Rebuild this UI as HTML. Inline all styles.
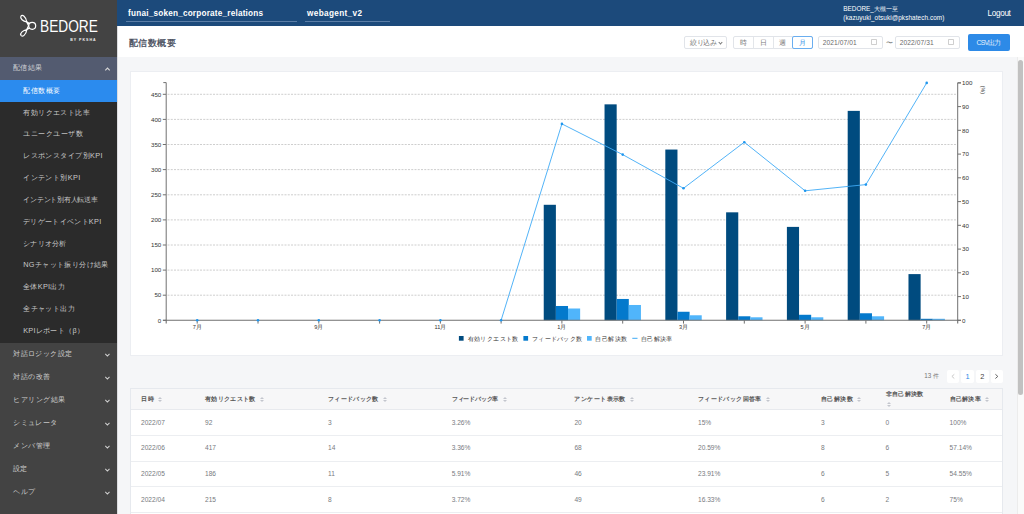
<!DOCTYPE html>
<html><head><meta charset="utf-8"><style>
*{margin:0;padding:0;box-sizing:border-box}
html,body{width:1024px;height:514px;overflow:hidden;background:#f5f6f8;font-family:"Liberation Sans",sans-serif}
.abs{position:absolute}
.t{position:absolute;white-space:nowrap}
.chev{position:absolute;width:3.4px;height:3.4px;border-right:1px solid #d0d0d0;border-bottom:1px solid #d0d0d0;transform:rotate(45deg)}
.chev.up{transform:rotate(225deg)}
.chev.sm{width:3px;height:3px;border-color:#777;border-width:0 0.9px 0.9px 0}
.box{position:absolute;border:1px solid #e1e4e9;border-radius:2px;background:#fff}
.cal{position:absolute;width:5.8px;height:5.6px;border:0.8px solid #cfcfcf;border-top-width:1.4px;border-radius:0.8px}
.srt{position:absolute;width:5px;height:6px}
.srt:before{content:"";position:absolute;left:0;top:0;border-left:2.3px solid transparent;border-right:2.3px solid transparent;border-bottom:2.3px solid #c3c6cd}
.srt:after{content:"";position:absolute;left:0;top:3.1px;border-left:2.3px solid transparent;border-right:2.3px solid transparent;border-top:2.3px solid #c3c6cd}
</style></head><body>
<div class="abs" style="left:0;top:0;width:117px;height:514px;background:#434343"></div>
<svg class="abs" style="left:15px;top:10px" width="30" height="30" viewBox="15 10 30 30">
<g fill="none" stroke="#fff" stroke-width="1.2" stroke-linejoin="round">
<circle cx="32.2" cy="25.8" r="3.5"/>
<path d="M26.8,22 C23,21.2 19.8,18.6 20.9,16.3 C22.2,14 26,16.5 26.8,22 Z"/>
<path d="M26.8,29.6 C23,30.4 19.8,33 20.9,35.3 C22.2,37.6 26,35.1 26.8,29.6 Z"/>
<path d="M26.6,21.8 L29.6,23.6 M26.6,29.8 L29.6,28 M26.6,21.8 L28.6,25.8 L26.6,29.8"/>
</g></svg>
<div class="abs" style="left:39.6px;top:18.2px;font-size:16.5px;line-height:17px;color:#fff;transform:scaleX(0.83);transform-origin:0 0">BEDORE</div>
<div class="abs" style="left:70.2px;top:37.8px;font-size:3.6px;color:#eee;letter-spacing:1px;font-weight:bold;line-height:5px">BY PKSHA</div>
<div class="abs" style="left:0;top:57px;width:117px;height:23px;background:#535b70"></div>
<div class="t" style="left:13.00px;top:63.24px;font-size:7.3px;line-height:10.22px;color:#d2d4d8;letter-spacing:0.400px">配信結果</div>
<svg class="abs" style="left:100px;top:60px" width="16" height="16" viewBox="100 60 16 16"><polyline points="105.3,70.3 107.5,68.1 109.7,70.3" fill="none" stroke="#d8d8d8" stroke-width="1.05"/></svg>
<div class="abs" style="left:0;top:80px;width:117px;height:262.5px;background:#2b2b2b"></div>
<div class="abs" style="left:0;top:80px;width:117px;height:22px;background:#2b8bee"></div>
<div class="t" style="left:23.20px;top:85.74px;font-size:7.3px;line-height:10.22px;color:#ffffff;letter-spacing:0.500px">配信数概要</div>
<div class="t" style="left:23.20px;top:107.57px;font-size:7.3px;line-height:10.22px;color:#c9c9c9;letter-spacing:0.450px">有効リクエスト比率</div>
<div class="t" style="left:23.20px;top:129.40px;font-size:7.3px;line-height:10.22px;color:#c9c9c9;letter-spacing:0.514px">ユニークユーザ数</div>
<div class="t" style="left:23.20px;top:151.23px;font-size:7.3px;line-height:10.22px;color:#c9c9c9;letter-spacing:0.421px">レスポンスタイプ別KPI</div>
<div class="t" style="left:23.20px;top:173.06px;font-size:7.3px;line-height:10.22px;color:#c9c9c9;letter-spacing:0.429px">インテント別KPI</div>
<div class="t" style="left:23.20px;top:194.89px;font-size:7.3px;line-height:10.22px;color:#c9c9c9;letter-spacing:-0.220px">インテント別有人転送率</div>
<div class="t" style="left:23.20px;top:216.72px;font-size:7.3px;line-height:10.22px;color:#c9c9c9;letter-spacing:0.294px">デリゲートイベントKPI</div>
<div class="t" style="left:23.20px;top:238.55px;font-size:7.3px;line-height:10.22px;color:#c9c9c9;letter-spacing:0.250px">シナリオ分析</div>
<div class="t" style="left:23.20px;top:260.38px;font-size:7.3px;line-height:10.22px;color:#c9c9c9;letter-spacing:0.391px">NGチャット振り分け結果</div>
<div class="t" style="left:23.20px;top:282.21px;font-size:7.3px;line-height:10.22px;color:#c9c9c9;letter-spacing:0.289px">全体KPI出力</div>
<div class="t" style="left:23.20px;top:304.04px;font-size:7.3px;line-height:10.22px;color:#c9c9c9;letter-spacing:0.417px">全チャット出力</div>
<div class="t" style="left:23.20px;top:325.87px;font-size:7.3px;line-height:10.22px;color:#c9c9c9;letter-spacing:0.309px">KPIレポート（β）</div>
<div class="t" style="left:13.20px;top:348.84px;font-size:7.3px;line-height:10.22px;color:#d0d0d0;letter-spacing:0.429px">対話ロジック設定</div>
<svg class="abs" style="left:100px;top:351.5px" width="16" height="8" viewBox="100 351.5 16 8"><polyline points="105.3,353.40 107.4,355.60 109.5,353.40" fill="none" stroke="#d0d0d0" stroke-width="1.05"/></svg>
<div class="t" style="left:13.20px;top:371.84px;font-size:7.3px;line-height:10.22px;color:#d0d0d0;letter-spacing:0.500px">対話の改善</div>
<svg class="abs" style="left:100px;top:374.5px" width="16" height="8" viewBox="100 374.5 16 8"><polyline points="105.3,376.40 107.4,378.60 109.5,376.40" fill="none" stroke="#d0d0d0" stroke-width="1.05"/></svg>
<div class="t" style="left:13.20px;top:394.84px;font-size:7.3px;line-height:10.22px;color:#d0d0d0;letter-spacing:0.517px">ヒアリング結果</div>
<svg class="abs" style="left:100px;top:397.5px" width="16" height="8" viewBox="100 397.5 16 8"><polyline points="105.3,399.40 107.4,401.60 109.5,399.40" fill="none" stroke="#d0d0d0" stroke-width="1.05"/></svg>
<div class="t" style="left:13.20px;top:417.84px;font-size:7.3px;line-height:10.22px;color:#d0d0d0;letter-spacing:0.360px">シミュレータ</div>
<svg class="abs" style="left:100px;top:420.5px" width="16" height="8" viewBox="100 420.5 16 8"><polyline points="105.3,422.40 107.4,424.60 109.5,422.40" fill="none" stroke="#d0d0d0" stroke-width="1.05"/></svg>
<div class="t" style="left:13.20px;top:440.84px;font-size:7.3px;line-height:10.22px;color:#d0d0d0;letter-spacing:0.475px">メンバ管理</div>
<svg class="abs" style="left:100px;top:443.5px" width="16" height="8" viewBox="100 443.5 16 8"><polyline points="105.3,445.40 107.4,447.60 109.5,445.40" fill="none" stroke="#d0d0d0" stroke-width="1.05"/></svg>
<div class="t" style="left:13.20px;top:463.84px;font-size:7.3px;line-height:10.22px;color:#d0d0d0;letter-spacing:0.200px">設定</div>
<svg class="abs" style="left:100px;top:466.5px" width="16" height="8" viewBox="100 466.5 16 8"><polyline points="105.3,468.40 107.4,470.60 109.5,468.40" fill="none" stroke="#d0d0d0" stroke-width="1.05"/></svg>
<div class="t" style="left:13.20px;top:486.84px;font-size:7.3px;line-height:10.22px;color:#d0d0d0;letter-spacing:0.400px">ヘルプ</div>
<svg class="abs" style="left:100px;top:489.5px" width="16" height="8" viewBox="100 489.5 16 8"><polyline points="105.3,491.40 107.4,493.60 109.5,491.40" fill="none" stroke="#d0d0d0" stroke-width="1.05"/></svg>
<div class="abs" style="left:117px;top:0;width:907px;height:26px;background:#1c4a7b"></div>
<div class="t" style="left:128.10px;top:8.36px;font-size:8.2px;line-height:11.48px;color:#ffffff;font-weight:bold;letter-spacing:0.207px">funai_soken_corporate_relations</div>
<div class="abs" style="left:126px;top:21px;width:171px;height:1px;background:#5a7da6"></div>
<div class="t" style="left:307.00px;top:8.36px;font-size:8.2px;line-height:11.48px;color:#ffffff;font-weight:bold;letter-spacing:0.358px">webagent_v2</div>
<div class="abs" style="left:305px;top:21px;width:85px;height:1px;background:#5a7da6"></div>
<div class="t" style="left:843.30px;top:4.89px;font-size:6.4px;line-height:8.96px;color:#ffffff">BEDORE_大槻一至</div>
<div class="t" style="left:843.30px;top:14.22px;font-size:6.4px;line-height:8.96px;color:#ffffff;letter-spacing:0.072px">(kazuyuki_otsuki@pkshatech.com)</div>
<div class="t" style="left:987.60px;top:8.06px;font-size:8.2px;line-height:11.48px;color:#ffffff;letter-spacing:-0.349px">Logout</div>
<div class="abs" style="left:117px;top:26px;width:907px;height:31px;background:#fff"></div>
<div class="t" style="left:128.50px;top:35.83px;font-size:9.4px;line-height:13.16px;color:#444a5a;letter-spacing:0.500px;-webkit-text-stroke:0.3px #444a5a">配信数概要</div>
<div class="box" style="left:684px;top:36px;width:43px;height:13px"></div>
<div class="t" style="left:690.00px;top:37.75px;font-size:6.6px;line-height:9.24px;color:#777;letter-spacing:-0.333px">絞り込み</div>
<span class="chev sm" style="left:719px;top:40.5px"></span>
<div class="box" style="left:733px;top:36px;width:80px;height:13px"></div>
<div class="abs" style="left:753px;top:36.5px;width:1px;height:12px;background:#e3e6ea"></div>
<div class="abs" style="left:773px;top:36.5px;width:1px;height:12px;background:#e3e6ea"></div>
<div class="t" style="left:739.50px;top:37.75px;font-size:6.6px;line-height:9.24px;color:#777">時</div>
<div class="t" style="left:759.50px;top:37.75px;font-size:6.6px;line-height:9.24px;color:#777">日</div>
<div class="t" style="left:779.00px;top:37.75px;font-size:6.6px;line-height:9.24px;color:#777">週</div>
<div class="abs" style="left:792px;top:35.5px;width:21px;height:13.5px;border:1px solid #6aaef0;border-radius:2px"></div>
<div class="t" style="left:798.80px;top:37.75px;font-size:6.6px;line-height:9.24px;color:#3d93e8">月</div>
<div class="box" style="left:818px;top:36px;width:65px;height:13px"></div>
<div class="t" style="left:822.70px;top:37.88px;font-size:6.6px;line-height:9.24px;color:#6a6a6a;letter-spacing:0.109px">2021/07/01</div>
<span class="cal" style="left:870.8px;top:39px"></span>
<div class="box" style="left:895px;top:36px;width:65px;height:13px"></div>
<div class="t" style="left:899.70px;top:37.88px;font-size:6.6px;line-height:9.24px;color:#6a6a6a;letter-spacing:0.109px">2022/07/31</div>
<span class="cal" style="left:947.8px;top:39px"></span>
<div class="t" style="left:886.40px;top:37.96px;font-size:7px;line-height:9.8px;color:#777">〜</div>
<div class="abs" style="left:968px;top:34px;width:42px;height:17px;background:#2d8ae7;border-radius:2px"></div>
<div class="t" style="left:976.50px;top:37.70px;font-size:6.8px;line-height:9.52px;color:#e8f2fc;letter-spacing:-0.746px">CSV出力</div>
<div class="abs" style="left:117px;top:26px;width:1px;height:488px;background:#dcdde0"></div>
<div class="abs" style="left:130px;top:71px;width:873px;height:284.5px;background:#fff;border:1px solid #eceef2"></div>
<svg class="abs" style="left:0;top:0" width="1024" height="514" viewBox="0 0 1024 514">
<line x1="167.5" y1="295.2" x2="957" y2="295.2" stroke="#bdbdbd" stroke-width="0.75" stroke-dasharray="2 1.25"/>
<line x1="167.5" y1="270.1" x2="957" y2="270.1" stroke="#bdbdbd" stroke-width="0.75" stroke-dasharray="2 1.25"/>
<line x1="167.5" y1="245.0" x2="957" y2="245.0" stroke="#bdbdbd" stroke-width="0.75" stroke-dasharray="2 1.25"/>
<line x1="167.5" y1="219.9" x2="957" y2="219.9" stroke="#bdbdbd" stroke-width="0.75" stroke-dasharray="2 1.25"/>
<line x1="167.5" y1="194.8" x2="957" y2="194.8" stroke="#bdbdbd" stroke-width="0.75" stroke-dasharray="2 1.25"/>
<line x1="167.5" y1="169.6" x2="957" y2="169.6" stroke="#bdbdbd" stroke-width="0.75" stroke-dasharray="2 1.25"/>
<line x1="167.5" y1="144.5" x2="957" y2="144.5" stroke="#bdbdbd" stroke-width="0.75" stroke-dasharray="2 1.25"/>
<line x1="167.5" y1="119.4" x2="957" y2="119.4" stroke="#bdbdbd" stroke-width="0.75" stroke-dasharray="2 1.25"/>
<line x1="167.5" y1="94.3" x2="957" y2="94.3" stroke="#bdbdbd" stroke-width="0.75" stroke-dasharray="2 1.25"/>
<rect x="543.74" y="204.79" width="12.15" height="115.51" fill="#004b7f"/>
<rect x="555.87" y="305.99" width="12.15" height="14.31" fill="#0479cc"/>
<rect x="568.00" y="308.50" width="12.15" height="11.80" fill="#50b5fb"/>
<rect x="604.53" y="104.35" width="12.15" height="215.95" fill="#004b7f"/>
<rect x="616.66" y="298.96" width="12.15" height="21.34" fill="#0479cc"/>
<rect x="628.79" y="304.98" width="12.15" height="15.32" fill="#50b5fb"/>
<rect x="665.32" y="149.55" width="12.15" height="170.75" fill="#004b7f"/>
<rect x="677.45" y="311.76" width="12.15" height="8.54" fill="#0479cc"/>
<rect x="689.58" y="315.28" width="12.15" height="5.02" fill="#50b5fb"/>
<rect x="726.11" y="212.33" width="12.15" height="107.97" fill="#004b7f"/>
<rect x="738.24" y="316.28" width="12.15" height="4.02" fill="#0479cc"/>
<rect x="750.37" y="317.29" width="12.15" height="3.01" fill="#50b5fb"/>
<rect x="786.90" y="226.89" width="12.15" height="93.41" fill="#004b7f"/>
<rect x="799.03" y="314.78" width="12.15" height="5.52" fill="#0479cc"/>
<rect x="811.16" y="317.29" width="12.15" height="3.01" fill="#50b5fb"/>
<rect x="847.69" y="110.88" width="12.15" height="209.42" fill="#004b7f"/>
<rect x="859.82" y="313.27" width="12.15" height="7.03" fill="#0479cc"/>
<rect x="871.95" y="316.28" width="12.15" height="4.02" fill="#50b5fb"/>
<rect x="908.48" y="274.10" width="12.15" height="46.20" fill="#004b7f"/>
<rect x="920.61" y="318.79" width="12.15" height="1.51" fill="#0479cc"/>
<rect x="932.74" y="318.79" width="12.15" height="1.51" fill="#50b5fb"/>
<polyline points="501.1,320.3 561.9,123.9 622.7,154.6 683.5,188.3 744.3,142.2 805.1,190.8 865.9,184.6 926.7,82.9" fill="none" stroke="#3eaaf6" stroke-width="0.9"/>
<path d="M163.3,82.6H166.2V320.3H163" fill="none" stroke="#707070" stroke-width="1"/>
<line x1="162.8" y1="320.3" x2="166" y2="320.3" stroke="#707070" stroke-width="1"/>
<text x="161.3" y="322.5" text-anchor="end" font-size="6.2" fill="#333">0</text>
<line x1="162.8" y1="295.2" x2="166" y2="295.2" stroke="#707070" stroke-width="1"/>
<text x="161.3" y="297.4" text-anchor="end" font-size="6.2" fill="#333">50</text>
<line x1="162.8" y1="270.1" x2="166" y2="270.1" stroke="#707070" stroke-width="1"/>
<text x="161.3" y="272.3" text-anchor="end" font-size="6.2" fill="#333">100</text>
<line x1="162.8" y1="245.0" x2="166" y2="245.0" stroke="#707070" stroke-width="1"/>
<text x="161.3" y="247.2" text-anchor="end" font-size="6.2" fill="#333">150</text>
<line x1="162.8" y1="219.9" x2="166" y2="219.9" stroke="#707070" stroke-width="1"/>
<text x="161.3" y="222.1" text-anchor="end" font-size="6.2" fill="#333">200</text>
<line x1="162.8" y1="194.8" x2="166" y2="194.8" stroke="#707070" stroke-width="1"/>
<text x="161.3" y="196.9" text-anchor="end" font-size="6.2" fill="#333">250</text>
<line x1="162.8" y1="169.6" x2="166" y2="169.6" stroke="#707070" stroke-width="1"/>
<text x="161.3" y="171.8" text-anchor="end" font-size="6.2" fill="#333">300</text>
<line x1="162.8" y1="144.5" x2="166" y2="144.5" stroke="#707070" stroke-width="1"/>
<text x="161.3" y="146.7" text-anchor="end" font-size="6.2" fill="#333">350</text>
<line x1="162.8" y1="119.4" x2="166" y2="119.4" stroke="#707070" stroke-width="1"/>
<text x="161.3" y="121.6" text-anchor="end" font-size="6.2" fill="#333">400</text>
<line x1="162.8" y1="94.3" x2="166" y2="94.3" stroke="#707070" stroke-width="1"/>
<text x="161.3" y="96.5" text-anchor="end" font-size="6.2" fill="#333">450</text>
<path d="M961,82.85H957.7V320.3H961" fill="none" stroke="#707070" stroke-width="1"/>
<line x1="957.7" y1="320.3" x2="961" y2="320.3" stroke="#707070" stroke-width="1"/>
<text x="962" y="322.5" font-size="6.2" fill="#333">0</text>
<line x1="957.7" y1="296.6" x2="961" y2="296.6" stroke="#707070" stroke-width="1"/>
<text x="962" y="298.8" font-size="6.2" fill="#333">10</text>
<line x1="957.7" y1="272.8" x2="961" y2="272.8" stroke="#707070" stroke-width="1"/>
<text x="962" y="275.0" font-size="6.2" fill="#333">20</text>
<line x1="957.7" y1="249.1" x2="961" y2="249.1" stroke="#707070" stroke-width="1"/>
<text x="962" y="251.3" font-size="6.2" fill="#333">30</text>
<line x1="957.7" y1="225.3" x2="961" y2="225.3" stroke="#707070" stroke-width="1"/>
<text x="962" y="227.5" font-size="6.2" fill="#333">40</text>
<line x1="957.7" y1="201.6" x2="961" y2="201.6" stroke="#707070" stroke-width="1"/>
<text x="962" y="203.8" font-size="6.2" fill="#333">50</text>
<line x1="957.7" y1="177.8" x2="961" y2="177.8" stroke="#707070" stroke-width="1"/>
<text x="962" y="180.0" font-size="6.2" fill="#333">60</text>
<line x1="957.7" y1="154.1" x2="961" y2="154.1" stroke="#707070" stroke-width="1"/>
<text x="962" y="156.3" font-size="6.2" fill="#333">70</text>
<line x1="957.7" y1="130.3" x2="961" y2="130.3" stroke="#707070" stroke-width="1"/>
<text x="962" y="132.5" font-size="6.2" fill="#333">80</text>
<line x1="957.7" y1="106.6" x2="961" y2="106.6" stroke="#707070" stroke-width="1"/>
<text x="962" y="108.8" font-size="6.2" fill="#333">90</text>
<line x1="957.7" y1="82.9" x2="961" y2="82.9" stroke="#707070" stroke-width="1"/>
<text x="962" y="85.1" font-size="6.2" fill="#333">100</text>
<text transform="translate(980.6,85.8) rotate(90)" font-size="5.2" fill="#333">(%)</text>
<path d="M166.2,323.6V320.3H957.7V323.6" fill="none" stroke="#707070" stroke-width="1.1"/>
<line x1="197.2" y1="320.3" x2="197.2" y2="323.6" stroke="#707070" stroke-width="1"/>
<text x="197.2" y="329.1" text-anchor="middle" font-size="5.6" fill="#333">7月</text>
<line x1="258.0" y1="320.3" x2="258.0" y2="323.6" stroke="#707070" stroke-width="1"/>
<line x1="318.8" y1="320.3" x2="318.8" y2="323.6" stroke="#707070" stroke-width="1"/>
<text x="318.8" y="329.1" text-anchor="middle" font-size="5.6" fill="#333">9月</text>
<line x1="379.6" y1="320.3" x2="379.6" y2="323.6" stroke="#707070" stroke-width="1"/>
<line x1="440.4" y1="320.3" x2="440.4" y2="323.6" stroke="#707070" stroke-width="1"/>
<text x="440.4" y="329.1" text-anchor="middle" font-size="5.6" fill="#333">11月</text>
<line x1="501.1" y1="320.3" x2="501.1" y2="323.6" stroke="#707070" stroke-width="1"/>
<line x1="561.9" y1="320.3" x2="561.9" y2="323.6" stroke="#707070" stroke-width="1"/>
<text x="561.9" y="329.1" text-anchor="middle" font-size="5.6" fill="#333">1月</text>
<line x1="622.7" y1="320.3" x2="622.7" y2="323.6" stroke="#707070" stroke-width="1"/>
<line x1="683.5" y1="320.3" x2="683.5" y2="323.6" stroke="#707070" stroke-width="1"/>
<text x="683.5" y="329.1" text-anchor="middle" font-size="5.6" fill="#333">3月</text>
<line x1="744.3" y1="320.3" x2="744.3" y2="323.6" stroke="#707070" stroke-width="1"/>
<line x1="805.1" y1="320.3" x2="805.1" y2="323.6" stroke="#707070" stroke-width="1"/>
<text x="805.1" y="329.1" text-anchor="middle" font-size="5.6" fill="#333">5月</text>
<line x1="865.9" y1="320.3" x2="865.9" y2="323.6" stroke="#707070" stroke-width="1"/>
<line x1="926.7" y1="320.3" x2="926.7" y2="323.6" stroke="#707070" stroke-width="1"/>
<text x="926.7" y="329.1" text-anchor="middle" font-size="5.6" fill="#333">7月</text>
<circle cx="197.2" cy="320.3" r="1.3" fill="#1f96ee"/>
<circle cx="258.0" cy="320.3" r="1.3" fill="#1f96ee"/>
<circle cx="318.8" cy="320.3" r="1.3" fill="#1f96ee"/>
<circle cx="379.6" cy="320.3" r="1.3" fill="#1f96ee"/>
<circle cx="440.4" cy="320.3" r="1.3" fill="#1f96ee"/>
<circle cx="501.1" cy="320.3" r="1.3" fill="#1f96ee"/>
<circle cx="561.9" cy="123.9" r="1.3" fill="#1f96ee"/>
<circle cx="622.7" cy="154.6" r="1.3" fill="#1f96ee"/>
<circle cx="683.5" cy="188.3" r="1.3" fill="#1f96ee"/>
<circle cx="744.3" cy="142.2" r="1.3" fill="#1f96ee"/>
<circle cx="805.1" cy="190.8" r="1.3" fill="#1f96ee"/>
<circle cx="865.9" cy="184.6" r="1.3" fill="#1f96ee"/>
<circle cx="926.7" cy="82.9" r="1.3" fill="#1f96ee"/>
<rect x="458.9" y="336" width="4.7" height="4.7" fill="#004b7f"/>
<text x="467.6" y="340.8" font-size="6.35" fill="#333" textLength="50.8" lengthAdjust="spacing">有効リクエスト数</text>
<rect x="523.4" y="336" width="4.7" height="4.7" fill="#0479cc"/>
<text x="532" y="340.8" font-size="6.35" fill="#333" textLength="50" lengthAdjust="spacing">フィードバック数</text>
<rect x="587" y="336" width="4.7" height="4.7" fill="#50b5fb"/>
<text x="595.3" y="340.8" font-size="6.35" fill="#333" textLength="32.1" lengthAdjust="spacing">自己解決数</text>
<line x1="632.3" y1="338.3" x2="637.5" y2="338.3" stroke="#3eaaf6" stroke-width="1"/>
<text x="641" y="340.8" font-size="6.35" fill="#333" textLength="31.2" lengthAdjust="spacing">自己解決率</text>
</svg>
<div class="t" style="left:924.30px;top:371.76px;font-size:6.3px;line-height:8.82px;color:#777;letter-spacing:-0.055px">13 件</div>
<div class="abs" style="left:946.7px;top:370px;width:12.5px;height:12.5px;background:#fff;border-radius:2px"></div>
<div class="abs" style="left:961.2px;top:370px;width:12.5px;height:12.5px;background:#fff;border-radius:2px"></div>
<div class="t" style="left:965.39px;top:372.02px;font-size:7.4px;line-height:10.36px;color:#2d8ae7">1</div>
<div class="abs" style="left:976.0px;top:370px;width:12.5px;height:12.5px;background:#fff;border-radius:2px"></div>
<div class="t" style="left:980.19px;top:372.02px;font-size:7.4px;line-height:10.36px;color:#444">2</div>
<div class="abs" style="left:990.5px;top:370px;width:12.5px;height:12.5px;background:#fff;border-radius:2px"></div>
<svg class="abs" style="left:0;top:0" width="1024" height="514"><polyline points="954.3,374.3 951.9,376.4 954.3,378.5" fill="none" stroke="#c4c4c4" stroke-width="0.9"/><polyline points="995.4,374.3 997.8,376.4 995.4,378.5" fill="none" stroke="#555" stroke-width="0.9"/></svg>
<div class="abs" style="left:130px;top:388px;width:873px;height:130px;background:#fff;border:1px solid #e6e9ee"></div>
<div class="abs" style="left:131px;top:389px;width:871px;height:20.5px;background:#f7f7f8;border-bottom:1px solid #e8eaee"></div>
<div class="abs" style="left:131px;top:435.2px;width:871px;height:1px;background:#eceef1"></div>
<div class="abs" style="left:131px;top:460.8px;width:871px;height:1px;background:#eceef1"></div>
<div class="abs" style="left:131px;top:486.4px;width:871px;height:1px;background:#eceef1"></div>
<div class="abs" style="left:131px;top:512.0px;width:871px;height:1px;background:#eceef1"></div>
<div class="t" style="left:141.00px;top:394.76px;font-size:6.3px;line-height:8.82px;color:#555;font-weight:bold;letter-spacing:0.600px">日時</div>
<span class="srt" style="left:158.1px;top:397px"></span>
<div class="t" style="left:205.00px;top:394.76px;font-size:6.3px;line-height:8.82px;color:#555;font-weight:bold;letter-spacing:0.357px">有効リクエスト数</div>
<span class="srt" style="left:260.0px;top:397px"></span>
<div class="t" style="left:328.00px;top:394.76px;font-size:6.3px;line-height:8.82px;color:#555;font-weight:bold;letter-spacing:0.357px">フィードバック数</div>
<span class="srt" style="left:383.0px;top:397px"></span>
<div class="t" style="left:451.70px;top:394.76px;font-size:6.3px;line-height:8.82px;color:#555;font-weight:bold;letter-spacing:-0.186px">フィードバック率</div>
<span class="srt" style="left:502.9px;top:397px"></span>
<div class="t" style="left:574.40px;top:394.76px;font-size:6.3px;line-height:8.82px;color:#555;font-weight:bold;letter-spacing:0.429px">アンケート表示数</div>
<span class="srt" style="left:629.9px;top:397px"></span>
<div class="t" style="left:698.00px;top:394.76px;font-size:6.3px;line-height:8.82px;color:#555;font-weight:bold;letter-spacing:0.367px">フィードバック回答率</div>
<span class="srt" style="left:765.8px;top:397px"></span>
<div class="t" style="left:821.00px;top:394.76px;font-size:6.3px;line-height:8.82px;color:#555;font-weight:bold;letter-spacing:0.400px">自己解決数</div>
<span class="srt" style="left:857.1px;top:397px"></span>
<div class="t" style="left:885.50px;top:389.66px;font-size:6.3px;line-height:8.82px;color:#555;font-weight:bold;letter-spacing:0.360px">非自己解決数</div>
<span class="srt" style="left:886.7px;top:401.6px"></span>
<div class="t" style="left:949.60px;top:394.76px;font-size:6.3px;line-height:8.82px;color:#555;font-weight:bold;letter-spacing:0.300px">自己解決率</div>
<span class="srt" style="left:985.3px;top:397px"></span>
<div class="t" style="left:141.00px;top:417.88px;font-size:6.6px;line-height:9.24px;color:#777a80">2022/07</div>
<div class="t" style="left:205.00px;top:417.88px;font-size:6.6px;line-height:9.24px;color:#777a80">92</div>
<div class="t" style="left:328.00px;top:417.88px;font-size:6.6px;line-height:9.24px;color:#777a80">3</div>
<div class="t" style="left:451.70px;top:417.88px;font-size:6.6px;line-height:9.24px;color:#777a80">3.26%</div>
<div class="t" style="left:574.40px;top:417.88px;font-size:6.6px;line-height:9.24px;color:#777a80">20</div>
<div class="t" style="left:698.00px;top:417.88px;font-size:6.6px;line-height:9.24px;color:#777a80">15%</div>
<div class="t" style="left:821.00px;top:417.88px;font-size:6.6px;line-height:9.24px;color:#777a80">3</div>
<div class="t" style="left:885.50px;top:417.88px;font-size:6.6px;line-height:9.24px;color:#777a80">0</div>
<div class="t" style="left:949.60px;top:417.88px;font-size:6.6px;line-height:9.24px;color:#777a80">100%</div>
<div class="t" style="left:141.00px;top:443.48px;font-size:6.6px;line-height:9.24px;color:#777a80">2022/06</div>
<div class="t" style="left:205.00px;top:443.48px;font-size:6.6px;line-height:9.24px;color:#777a80">417</div>
<div class="t" style="left:328.00px;top:443.48px;font-size:6.6px;line-height:9.24px;color:#777a80">14</div>
<div class="t" style="left:451.70px;top:443.48px;font-size:6.6px;line-height:9.24px;color:#777a80">3.36%</div>
<div class="t" style="left:574.40px;top:443.48px;font-size:6.6px;line-height:9.24px;color:#777a80">68</div>
<div class="t" style="left:698.00px;top:443.48px;font-size:6.6px;line-height:9.24px;color:#777a80">20.59%</div>
<div class="t" style="left:821.00px;top:443.48px;font-size:6.6px;line-height:9.24px;color:#777a80">8</div>
<div class="t" style="left:885.50px;top:443.48px;font-size:6.6px;line-height:9.24px;color:#777a80">6</div>
<div class="t" style="left:949.60px;top:443.48px;font-size:6.6px;line-height:9.24px;color:#777a80">57.14%</div>
<div class="t" style="left:141.00px;top:469.08px;font-size:6.6px;line-height:9.24px;color:#777a80">2022/05</div>
<div class="t" style="left:205.00px;top:469.08px;font-size:6.6px;line-height:9.24px;color:#777a80">186</div>
<div class="t" style="left:328.00px;top:469.08px;font-size:6.6px;line-height:9.24px;color:#777a80">11</div>
<div class="t" style="left:451.70px;top:469.08px;font-size:6.6px;line-height:9.24px;color:#777a80">5.91%</div>
<div class="t" style="left:574.40px;top:469.08px;font-size:6.6px;line-height:9.24px;color:#777a80">46</div>
<div class="t" style="left:698.00px;top:469.08px;font-size:6.6px;line-height:9.24px;color:#777a80">23.91%</div>
<div class="t" style="left:821.00px;top:469.08px;font-size:6.6px;line-height:9.24px;color:#777a80">6</div>
<div class="t" style="left:885.50px;top:469.08px;font-size:6.6px;line-height:9.24px;color:#777a80">5</div>
<div class="t" style="left:949.60px;top:469.08px;font-size:6.6px;line-height:9.24px;color:#777a80">54.55%</div>
<div class="t" style="left:141.00px;top:494.68px;font-size:6.6px;line-height:9.24px;color:#777a80">2022/04</div>
<div class="t" style="left:205.00px;top:494.68px;font-size:6.6px;line-height:9.24px;color:#777a80">215</div>
<div class="t" style="left:328.00px;top:494.68px;font-size:6.6px;line-height:9.24px;color:#777a80">8</div>
<div class="t" style="left:451.70px;top:494.68px;font-size:6.6px;line-height:9.24px;color:#777a80">3.72%</div>
<div class="t" style="left:574.40px;top:494.68px;font-size:6.6px;line-height:9.24px;color:#777a80">49</div>
<div class="t" style="left:698.00px;top:494.68px;font-size:6.6px;line-height:9.24px;color:#777a80">16.33%</div>
<div class="t" style="left:821.00px;top:494.68px;font-size:6.6px;line-height:9.24px;color:#777a80">6</div>
<div class="t" style="left:885.50px;top:494.68px;font-size:6.6px;line-height:9.24px;color:#777a80">2</div>
<div class="t" style="left:949.60px;top:494.68px;font-size:6.6px;line-height:9.24px;color:#777a80">75%</div>
<div class="abs" style="left:1017px;top:57px;width:7px;height:457px;background:#fafafa;border-left:1px solid #ececec"></div>
<div class="abs" style="left:1018px;top:59.6px;width:5px;height:335px;background:#c1c1c1;border-radius:3px"></div>
</body></html>
